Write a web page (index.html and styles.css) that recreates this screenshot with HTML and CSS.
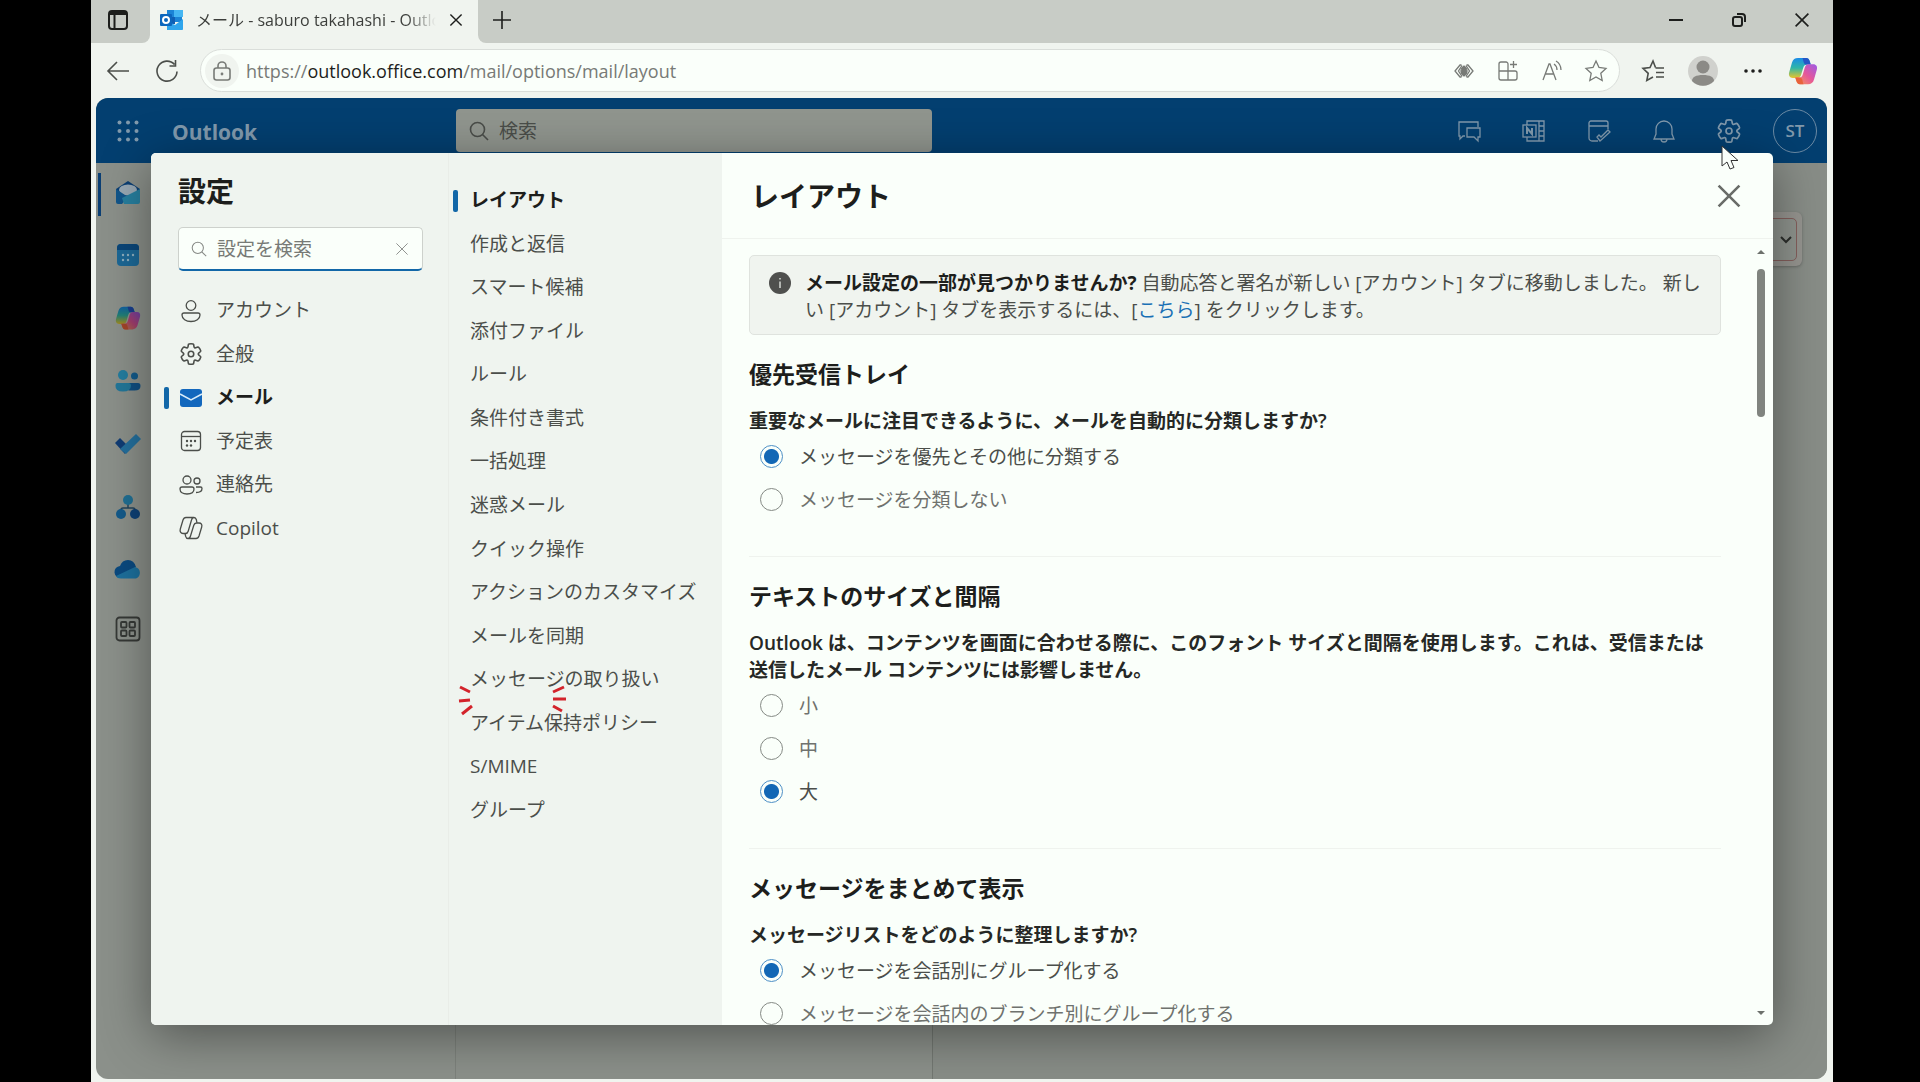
FILE: index.html
```html
<!DOCTYPE html>
<html lang="ja">
<head>
    <meta charset="UTF-8">
    <meta name="viewport" content="width=device-width, initial-scale=1.0">
    <title>メール - saburo takahashi - Outlook</title>
    <link rel="stylesheet" href="styles.css">
</head>
<body>
    <svg class="sprite" aria-hidden="true">
        <defs>
            <linearGradient id="cp-top" x1="0" y1="0" x2="0" y2="1">
                <stop offset="0" stop-color="#1a8ae8"/>
                <stop offset=".5" stop-color="#2fb6a8"/>
                <stop offset="1" stop-color="#e6c52c"/>
            </linearGradient>
            <linearGradient id="cp-bottom" x1="1" y1="0" x2="0" y2="1">
                <stop offset="0" stop-color="#9a5be8"/>
                <stop offset=".5" stop-color="#e5569b"/>
                <stop offset="1" stop-color="#f8a04c"/>
            </linearGradient>
        </defs>
        <symbol id="gear" viewBox="0 0 20 20">
            <path d="M1.91 7.38A8.5 8.5 0 0 1 3.7 4.3a.5.5 0 0 1 .54-.13l1.92.68a1 1 0 0 0 1.32-.76l.36-2a.5.5 0 0 1 .4-.4 8.53 8.53 0 0 1 3.55 0c.2.04.35.2.38.4l.37 2a1 1 0 0 0 1.32.76l1.92-.68a.5.5 0 0 1 .54.13 8.5 8.5 0 0 1 1.78 3.08c.06.2 0 .4-.15.54l-1.56 1.32a1 1 0 0 0 0 1.52l1.56 1.32a.5.5 0 0 1 .15.54 8.5 8.5 0 0 1-1.78 3.08.5.5 0 0 1-.54.13l-1.92-.68a1 1 0 0 0-1.32.76l-.37 2a.5.5 0 0 1-.38.4 8.53 8.53 0 0 1-3.56 0 .5.5 0 0 1-.39-.4l-.36-2a1 1 0 0 0-1.32-.76l-1.92.68a.5.5 0 0 1-.54-.13 8.5 8.5 0 0 1-1.78-3.08.5.5 0 0 1 .15-.54l1.56-1.32a1 1 0 0 0 0-1.52L2.06 7.92a.5.5 0 0 1-.15-.54Z"/>
            <circle cx="10" cy="10" r="2.3"/>
        </symbol>
        <symbol id="search" viewBox="0 0 20 20">
            <circle cx="8.5" cy="8.5" r="7"/>
            <path d="M13.500 13.500l5.500 5.500"/>
        </symbol>
        <symbol id="close" viewBox="0 0 20 20">
            <path d="M2 2l16 16M18 2L2 18"/>
        </symbol>
        <symbol id="copilot-color" viewBox="0 0 24 24">
            <path fill="url(#cp-top)" d="M8 1.500h6.500c1.600 0 2.300 1 2.800 2.500l.9 2.800h-2.600c-1.800 0-2.900.7-3.400 2.500l-1.700 5.700c-.5 1.700-1.600 2.500-3.200 2.500H3.800C1.400 17.500.3 15.600.9 13.200L3.200 5.200C4 2.500 5.500 1.500 8 1.500Z"/>
            <path fill="#2456c6" d="M11.500 1.500h3c1.600 0 2.300 1 2.800 2.500l.9 2.800h-3.500c-1.500 0-2-1.100-2.300-2.300C12.100 3.100 11.900 2 11.500 1.500Z"/>
            <path fill="url(#cp-bottom)" d="M16 22.500H9.500c-1.600 0-2.300-1-2.800-2.500l-.9-2.800h2.600c1.800 0 2.900-.7 3.400-2.500L13.500 9c.5-1.700 1.600-2.500 3.200-2.500h3.500c2.400 0 3.500 1.900 2.900 4.300l-2.300 8c-.8 2.700-2.300 3.700-4.800 3.700Z"/>
            <path fill="#e8623c" d="M12.500 22.500h-3c-1.600 0-2.300-1-2.800-2.500l-.9-2.800h3.500c1.500 0 2 1.100 2.300 2.300.3 1.400.5 2.500.9 3Z"/>
        </symbol>
    </svg>

    <div class="browser">
        <div class="tab-strip">
            <button class="strip-button" aria-label="タブ操作メニュー">
                <svg class="icon icon-20 bold" viewBox="0 0 20 20"><rect x="1" y="1" width="18" height="18" rx="3"/><path d="M1 4h18M1.500 2.500h17M6.500 5v14"/></svg>
            </button>
            <div class="tab">
                <svg class="favicon" viewBox="0 0 24 21">
                    <path fill="#1b84d6" d="M7 0h15v12H7z"/>
                    <path fill="#45b6f2" d="M14 0h9v7h-9z"/>
                    <path fill="#0f5fb4" d="M7 7h8v7H7z"/>
                    <path fill="#2fa5ec" d="M7 20V11l8 4 8-6v10c0 1-1 1-1 1z"/>
                    <rect fill="#0c66bd" y="4" width="12" height="12" rx="1"/>
                    <circle cx="6" cy="10" r="3" fill="none" stroke="#fff" stroke-width="2"/>
                </svg>
                <span class="tab-title">メール - saburo takahashi - Outlook</span>
                <button class="tab-close" aria-label="タブを閉じる"><svg class="icon icon-14 bold"><use href="#close"/></svg></button>
            </div>
            <button class="new-tab" aria-label="新しいタブ"><svg class="icon icon-20 medium" viewBox="0 0 20 20"><path d="M10 1v18M1 10h18"/></svg></button>
            <div class="window-controls">
                <button aria-label="最小化"><svg class="icon icon-16 bold" viewBox="0 0 16 16"><path d="M1 8h14"/></svg></button>
                <button aria-label="元に戻す"><svg class="icon icon-16 bold" viewBox="0 0 16 16"><rect x="2" y="5" width="9" height="9" rx="2"/><path d="M6 2h5a3 3 0 0 1 3 3v5"/></svg></button>
                <button aria-label="閉じる"><svg class="icon icon-16 bold"><use href="#close"/></svg></button>
            </div>
        </div>

        <div class="toolbar">
            <button aria-label="戻る"><svg class="icon icon-22 medium" viewBox="0 0 22 22"><path d="M22 11H1M10 2L1 11l9 9"/></svg></button>
            <button aria-label="更新"><svg class="icon icon-24 medium" viewBox="0 0 24 24"><path d="M22 12.500A10 10 0 1 1 19.500 5.500M20.500 1v6h-6"/></svg></button>
            <div class="address">
                <span class="site-info"><svg class="icon icon-20 gray medium" viewBox="0 0 20 20"><rect x="2" y="7" width="16" height="12" rx="2.500"/><path d="M6 7V5a4 4 0 0 1 8 0v2"/><circle cx="10" cy="13" r=".6"/></svg></span>
                <span class="url">https://<b>outlook.office.com</b>/mail/options/mail/layout</span>
                <div class="address-icons">
                    <button aria-label="パスワード"><svg class="icon icon-20 gray" viewBox="0 0 20 20"><path d="M7.500 4H6l-5 6 5 6h1.500M12.500 4H14l5 6-5 6h-1.500M8 4.500L4.500 10 8 15.500M12 4.500l3.500 5.500-3.500 5.500"/><path fill="currentColor" d="M10 5q3 2 3 5t-3 5q-3-2-3-5t3-5z"/></svg></button>
                    <button aria-label="アプリをインストール"><svg class="icon icon-20 gray" viewBox="0 0 20 20"><path d="M10 19V3a2 2 0 0 0-2-2H3a2 2 0 0 0-2 2v14a2 2 0 0 0 2 2h14a2 2 0 0 0 2-2v-5a2 2 0 0 0-2-2H1M15.500 0v7M12 3.500h7"/></svg></button>
                    <button aria-label="音声で読み上げる"><svg class="icon icon-20 gray" viewBox="0 0 20 20"><path d="M1 19L7 3h1l6 16M3 13h9M12 3q3 2 3 6M14 0q5 3 5 9"/></svg></button>
                    <button aria-label="お気に入りに追加"><svg class="icon icon-22 gray" viewBox="0 0 22 22"><path d="M11 1l3 6.500 7 .9-5.200 4.900 1.400 7.200L11 17l-6.200 3.500 1.400-7.200L1 8.400l7-.9z"/></svg></button>
                </div>
            </div>
            <div class="toolbar-icons">
                <button aria-label="お気に入り"><svg class="icon icon-22 medium" viewBox="0 0 22 22"><path d="M13.500 7.500L11 1 8 7.500l-7 .9 5.200 4.900-1.400 7.200L11 17M13.500 8H22M14 12.500h8M14 17h8"/></svg></button>
                <button aria-label="プロファイル"><svg class="profile" viewBox="0 0 30 30"><circle cx="15" cy="15" r="15" fill="#d0d1cd"/><circle cx="15" cy="11" r="6.500" fill="#8b8a86"/><path fill="#8b8a86" d="M4 25c0-4 4-6 11-6s11 2 11 6a15 15 0 0 1-22 0z"/></svg></button>
                <button aria-label="設定など"><svg class="dots" viewBox="0 0 20 20"><circle cx="3" cy="10" r="1.800"/><circle cx="10" cy="10" r="1.800"/><circle cx="17" cy="10" r="1.800"/></svg></button>
                <button aria-label="Copilot"><svg class="copilot"><use href="#copilot-color"/></svg></button>
            </div>
        </div>

        <div class="app">
            <header class="app-header">
                <button class="launcher" aria-label="アプリ起動ツール">
                    <svg viewBox="0 0 22 22" width="22" height="22"><g fill="currentColor"><circle cx="2.500" cy="2.500" r="2"/><circle cx="11" cy="2.500" r="2"/><circle cx="19.500" cy="2.500" r="2"/><circle cx="2.500" cy="11" r="2"/><circle cx="11" cy="11" r="2"/><circle cx="19.500" cy="11" r="2"/><circle cx="2.500" cy="19.500" r="2"/><circle cx="11" cy="19.500" r="2"/><circle cx="19.500" cy="19.500" r="2"/></g></svg>
                </button>
                <span class="brand">Outlook</span>
                <label class="mail-search">
                    <svg class="icon icon-20 medium"><use href="#search"/></svg>
                    <input type="text" placeholder="検索" aria-label="検索">
                </label>
                <div class="header-icons">
                    <button aria-label="Teams チャット"><svg class="icon icon-24" viewBox="0 0 24 24"><path d="M8 17H6l-3 3v-3H2V3h19v5"/><path d="M10 9h13v9h-2v4l-4-4h-7z"/></svg></button>
                    <button aria-label="OneNote フィード"><svg class="icon icon-24" viewBox="0 0 24 24"><path d="M5 6V2h17v20H5v-4M17 2v20M17 7h5M17 12h5M17 17h5"/><rect x="1" y="6" width="13" height="12"/><path stroke-width="2" d="M5 15V9l5 6V9"/></svg></button>
                    <button aria-label="予定一覧"><svg class="icon icon-24" viewBox="0 0 24 24"><path d="M11 22H5a3 3 0 0 1-3-3V4a2 2 0 0 1 2-2h15a2 2 0 0 1 2 2v6M2 7h19M10 18l3 4 10-9-2-2-7 7-2-2z"/></svg></button>
                    <button aria-label="通知"><svg class="icon icon-24" viewBox="0 0 24 24"><path d="M12 2a8 8 0 0 0-8 8v5l-2 5h20l-2-5v-5a8 8 0 0 0-8-8zM9 20q0 3 3 3t3-3"/></svg></button>
                    <button aria-label="設定"><svg class="icon icon-26"><use href="#gear"/></svg></button>
                    <button class="avatar">ST</button>
                </div>
            </header>

            <div class="app-body">
                <nav class="rail">
                    <a href="#" class="active" aria-label="メール"><svg viewBox="0 0 26 26"><path fill="#0b3f74" d="M1 10L13 2l12 8v8H1z"/><ellipse cx="13" cy="11" rx="9" ry="5.500" fill="#9aa9b4"/><path fill="#12568a" d="M1 10l12 8-6 7H3a2 2 0 0 1-2-2z"/><path fill="#277f9f" d="M25 10l-18 9 2 6h14a2 2 0 0 0 2-2z"/></svg></a>
                    <a href="#" aria-label="予定表"><svg viewBox="0 0 26 26"><rect x="2" y="2" width="22" height="22" rx="4" fill="#1c6896"/><path fill="#0b4679" d="M2 8V6a4 4 0 0 1 4-4h14a4 4 0 0 1 4 4v2z"/><g fill="#8fb0bf"><circle cx="8" cy="13" r="1.200"/><circle cx="13" cy="13" r="1.200"/><circle cx="18" cy="13" r="1.200"/><circle cx="8" cy="18" r="1.200"/><circle cx="13" cy="18" r="1.200"/></g></svg></a>
                    <a href="#" aria-label="Copilot"><svg class="dim" viewBox="0 0 24 24"><use href="#copilot-color"/></svg></a>
                    <a href="#" aria-label="連絡先"><svg viewBox="0 0 26 26"><circle cx="8" cy="7" r="5" fill="#237d9f"/><circle cx="19.500" cy="8" r="3.500" fill="#135a8a"/><path fill="#104f82" d="M14 15h9q2.500 0 2.500 3 0 4.500-6 4.500h-6z"/><path fill="#237799" d="M2 15h12q2 0 2 2.500 0 6-8 6T.500 17.500Q.500 15 2 15z"/></svg></a>
                    <a href="#" aria-label="To Do"><svg viewBox="0 0 26 26"><path fill="#103c74" d="M0 12l5-5 9 9-4 7z"/><path fill="#246f9c" d="M5 18L21 3l5 5-15 15z"/></svg></a>
                    <a href="#" aria-label="組織エクスプローラー"><svg viewBox="0 0 26 26"><path fill="none" stroke="#23445c" stroke-width="1.500" d="M13 10v4M6 20v-4q0-2 2-2h10q2 0 2 2v4"/><circle cx="13" cy="6" r="5" fill="#206f93"/><circle cx="6" cy="20" r="5" fill="#135a8a"/><circle cx="20" cy="20" r="5" fill="#0e4176"/></svg></a>
                    <a href="#" aria-label="OneDrive"><svg class="cloud" viewBox="0 0 28 28"><path fill="#0b4a80" d="M7 22a6 6 0 0 1-1-12q2-6 8-6t8 7z"/><path fill="#1d709d" d="M2 20l19-9a6 6 0 0 1 1 11.500H7q-4 0-5-2.500z"/></svg></a>
                    <a href="#" aria-label="その他のアプリ"><svg class="outline" viewBox="0 0 26 26"><rect x="1.500" y="1.500" width="23" height="23" rx="3"/><rect x="6" y="6" width="5.500" height="5.500" rx="1"/><rect x="14.500" y="6" width="5.500" height="5.500" rx="1"/><rect x="6" y="14.500" width="5.500" height="5.500" rx="1"/><rect x="14.500" y="14.500" width="5.500" height="5.500" rx="1"/></svg></a>
                </nav>
                <div class="folder-pane"></div>
                <div class="message-pane"></div>
                <div class="reading-pane">
                    <div class="ribbon">
                        <button class="ribbon-more" aria-label="その他"><svg class="icon icon-12 bold" viewBox="0 0 12 12"><path d="M1 3l5 5 5-5"/></svg></button>
                    </div>
                </div>
            </div>

            <div class="backdrop">
                <div class="dialog" role="dialog" aria-label="設定">
                    <div class="categories">
                        <h1>設定</h1>
                        <label class="settings-search">
                            <svg class="icon icon-16 light"><use href="#search"/></svg>
                            <input type="text" placeholder="設定を検索" aria-label="設定を検索">
                            <button aria-label="クリア"><svg class="icon icon-14 light"><use href="#close"/></svg></button>
                        </label>
                        <ul class="category-list">
                            <li><a href="#"><svg class="icon icon-24" viewBox="0 0 24 24"><circle cx="12" cy="6.500" r="4.800"/><path d="M5 14h14a2 2 0 0 1 2 2c0 4-4 6.500-9 6.500S3 20 3 16a2 2 0 0 1 2-2z"/></svg>アカウント</a></li>
                            <li><a href="#"><svg class="icon icon-24"><use href="#gear"/></svg>全般</a></li>
                            <li><a href="#" class="active"><svg class="icon icon-24" viewBox="0 0 24 24"><rect x="1" y="3" width="22" height="18" rx="3" fill="#1267bd" stroke="none"/><path stroke="#d9ecfa" stroke-width="1.500" d="M1 8l11 6 11-6"/></svg>メール</a></li>
                            <li><a href="#"><svg class="icon icon-24" viewBox="0 0 24 24"><rect x="2.500" y="2.500" width="19" height="19" rx="3"/><path d="M2.500 7.500h19"/><g fill="currentColor" stroke="none"><circle cx="8" cy="12" r="1.200"/><circle cx="12" cy="12" r="1.200"/><circle cx="16" cy="12" r="1.200"/><circle cx="8" cy="16.500" r="1.200"/><circle cx="12" cy="16.500" r="1.200"/></g></svg>予定表</a></li>
                            <li><a href="#"><svg class="icon icon-24" viewBox="0 0 24 24"><circle cx="8" cy="7" r="4"/><circle cx="18" cy="8" r="3"/><path d="M3 14h10a2 2 0 0 1 2 2c0 3.500-3 5-7 5s-7-1.500-7-5a2 2 0 0 1 2-2zM17 14h4.500a1.500 1.500 0 0 1 1.500 1.500c0 3-2.500 4-6 4"/></svg>連絡先</a></li>
                            <li><a href="#"><svg class="icon icon-24" viewBox="0 0 24 24"><path d="M7 1.500h8c1.500 0 2 1 2.400 2.300L18 7M7 1.500C5.500 1.500 4.500 2.500 4 4L1.300 13c-.7 2.500.5 4.500 2.700 4.500h2.500c1.500 0 2.300-.8 2.700-2.200L12.500 4c.4-1.500 1-2.500 2.500-2.500M17 22.500H9c-1.500 0-2-1-2.400-2.300L6 17.500M17 22.500c1.500 0 2.500-1 3-2.500l2.700-9c.7-2.500-.5-4-2.700-4h-2.500c-1.500 0-2.300.8-2.700 2.200L11.500 20c-.4 1.500-1 2.500-2.500 2.500"/></svg>Copilot</a></li>
                        </ul>
                    </div>

                    <div class="subpages">
                        <ul class="subpage-list">
                            <li><a href="#" class="active">レイアウト</a></li>
                            <li><a href="#">作成と返信</a></li>
                            <li><a href="#">スマート候補</a></li>
                            <li><a href="#">添付ファイル</a></li>
                            <li><a href="#">ルール</a></li>
                            <li><a href="#">条件付き書式</a></li>
                            <li><a href="#">一括処理</a></li>
                            <li><a href="#">迷惑メール</a></li>
                            <li><a href="#">クイック操作</a></li>
                            <li><a href="#">アクションのカスタマイズ</a></li>
                            <li><a href="#">メールを同期</a></li>
                            <li><a href="#">メッセージの取り扱い</a></li>
                            <li><a href="#">アイテム保持ポリシー</a></li>
                            <li><a href="#">S/MIME</a></li>
                            <li><a href="#">グループ</a></li>
                        </ul>
                        <svg class="click-marks" viewBox="0 0 108 32"><path d="M2 3l10 5M1 17l11-1M4 30l10-8M95 8l11-5M95 15h13M95 22l9 5"/></svg>
                    </div>

                    <div class="page">
                        <div class="page-header">
                            <h2>レイアウト</h2>
                            <button aria-label="閉じる"><svg class="icon icon-26 thick"><use href="#close"/></svg></button>
                        </div>
                        <div class="page-body">
                            <div class="page-content">
                                <div class="notice">
                                    <svg class="info" viewBox="0 0 22 22"><circle cx="11" cy="11" r="11" fill="#4f504e"/><path stroke="#d5d8d4" stroke-width="1.500" d="M11 9.500V16M11 6v1.500"/></svg>
                                    <p><b>メール設定の一部が見つかりませんか?</b> 自動応答と署名が新しい [アカウント] タブに移動しました。 新しい [アカウント] タブを表示するには、[<a href="#">こちら</a>] をクリックします。</p>
                                </div>

                                <section>
                                    <h3>優先受信トレイ</h3>
                                    <fieldset>
                                        <legend>重要なメールに注目できるように、メールを自動的に分類しますか?</legend>
                                        <label><input type="radio" name="focused" checked><span>メッセージを優先とその他に分類する</span></label>
                                        <label><input type="radio" name="focused"><span>メッセージを分類しない</span></label>
                                    </fieldset>
                                </section>

                                <section>
                                    <h3>テキストのサイズと間隔</h3>
                                    <fieldset>
                                        <legend>Outlook は、コンテンツを画面に合わせる際に、このフォント サイズと間隔を使用します。これは、受信または送信したメール コンテンツには影響しません。</legend>
                                        <label><input type="radio" name="size"><span>小</span></label>
                                        <label><input type="radio" name="size"><span>中</span></label>
                                        <label><input type="radio" name="size" checked><span>大</span></label>
                                    </fieldset>
                                </section>

                                <section>
                                    <h3>メッセージをまとめて表示</h3>
                                    <fieldset>
                                        <legend>メッセージリストをどのように整理しますか?</legend>
                                        <label><input type="radio" name="thread" checked><span>メッセージを会話別にグループ化する</span></label>
                                        <label><input type="radio" name="thread"><span>メッセージを会話内のブランチ別にグループ化する</span></label>
                                    </fieldset>
                                </section>
                            </div>
                            <div class="scrollbar">
                                <span class="arrow-up"></span>
                                <span class="thumb"></span>
                                <span class="arrow-down"></span>
                            </div>
                        </div>
                    </div>
                </div>
            </div>

            <svg class="pointer" viewBox="0 0 18 26"><path fill="#fafffa" stroke="#333" d="M1 1v20l5-4 3 7 4-1.500-3-7h7z"/></svg>
        </div>
    </div>
</body>
</html>
```
FILE: styles.css
```css
* {
    margin: 0;
    padding: 0;
    box-sizing: border-box;
}

body {
    height: 100vh;
    padding: 0 87px 0 91px;
    background: #000;
    color: #4b4e4a;
    font-family: "Open Sans", "Noto Sans CJK JP", sans-serif;
    font-size: 19px;
    line-height: 27px;
    overflow: hidden;
}

button {
    display: flex;
    align-items: center;
    justify-content: center;
    border: none;
    background: none;
    color: inherit;
    font: inherit;
    cursor: pointer;
}

input {
    border: none;
    outline: none;
    background: none;
    color: inherit;
    font: inherit;
    min-width: 0;
}

a {
    color: inherit;
    text-decoration: none;
}

ul {
    list-style: none;
}

/* Icons */
.sprite {
    position: absolute;
    width: 0;
    height: 0;
}

.icon {
    flex: none;
    fill: none;
    stroke: currentColor;
    stroke-width: 1.3;
    overflow: visible;
}

.icon.medium { stroke-width: 1.6; }
.icon.bold { stroke-width: 2; }
.icon.thick { stroke-width: 2; color: #6a6d69; }
.icon.gray { color: #777a76; }
.icon.light { color: #858884; }
.icon-12 { width: 12px; height: 12px; }
.icon-14 { width: 14px; height: 14px; }
.icon-16 { width: 16px; height: 16px; }
.icon-20 { width: 20px; height: 20px; }
.icon-22 { width: 22px; height: 22px; }
.icon-24 { width: 24px; height: 24px; }
.icon-26 { width: 26px; height: 26px; }

/* Browser window */
.browser {
    height: 100%;
    display: flex;
    flex-direction: column;
    background: #f0f4ef;
}

.tab-strip {
    display: flex;
    height: 43px;
    background: #f0f4ef;
    color: #1d1e1c;
}

.strip-button {
    width: 59px;
    padding-right: 5px;
    padding-bottom: 3px;
    background: #c8ccc6;
    border-bottom-right-radius: 8px;
}

.tab {
    display: flex;
    align-items: center;
    width: 328px;
    padding: 0 14px 3px 10px;
}

.favicon {
    flex: none;
    width: 24px;
    height: 21px;
    margin-right: 12px;
}

.tab-title {
    flex: 1;
    font-size: 16px;
    color: #3c3e3b;
    white-space: nowrap;
    overflow: hidden;
    -webkit-mask-image: linear-gradient(to right, #000 88%, transparent 100%);
    mask-image: linear-gradient(to right, #000 88%, transparent 100%);
}

.tab-close {
    width: 16px;
    margin-left: 12px;
}

.new-tab {
    width: 47px;
    padding-bottom: 4px;
    background: #c8ccc6;
    border-bottom-left-radius: 8px;
}

.window-controls {
    flex: 1;
    display: flex;
    justify-content: flex-end;
    padding-bottom: 3px;
    background: #c8ccc6;
}

.window-controls button {
    width: 63px;
}

.toolbar {
    display: flex;
    align-items: center;
    height: 55px;
    padding: 0 15px;
}

.toolbar > button {
    width: 24px;
    margin-right: 25px;
}

.toolbar > button + button {
    margin-right: 21px;
}

.address {
    flex: 1;
    display: flex;
    align-items: center;
    height: 43px;
    padding: 0 13px 0 4px;
    border: 1px solid #dadeda;
    border-radius: 22px;
    background: #fafffa;
}

.site-info {
    display: flex;
    align-items: center;
    justify-content: center;
    width: 34px;
    height: 34px;
    margin-right: 7px;
    border-radius: 50%;
    background: #f0f4ef;
}

.url {
    flex: 1;
    padding-top: 2px;
    font-size: 18px;
    color: #777a76;
}

.url b {
    font-weight: 400;
    color: #1d1e1c;
}

.address-icons,
.toolbar-icons {
    display: flex;
    align-items: center;
}

.address-icons {
    gap: 24px;
}

.address-icons button {
    width: 20px;
}

.toolbar-icons {
    gap: 20px;
    margin-left: 18px;
}

.toolbar-icons button {
    width: 30px;
}

.profile {
    width: 30px;
    height: 30px;
}

.dots {
    width: 20px;
    height: 20px;
    fill: #1d1e1c;
}

.copilot {
    width: 32px;
    height: 30px;
}

/* Outlook behind the dialog */
.app {
    position: relative;
    flex: 1;
    display: flex;
    flex-direction: column;
    margin: 0 6px 3px 5px;
    border-radius: 12px;
    background: #8b908a;
    overflow: hidden;
}

.app-header {
    display: flex;
    align-items: flex-start;
    height: 65px;
    background: #033f70;
    color: #8199ac;
}

.launcher {
    width: 64px;
    height: 65px;
}

.brand {
    width: 296px;
    padding-left: 12px;
    font-size: 21px;
    font-weight: 700;
    line-height: 68px;
}

.mail-search {
    display: flex;
    align-items: center;
    gap: 10px;
    width: 476px;
    height: 43px;
    margin-top: 11px;
    padding: 0 13px;
    border-radius: 4px;
    background: #90958e;
    color: #4a4d49;
}

.mail-search input {
    flex: 1;
    padding-top: 2px;
}

input::placeholder {
    color: inherit;
    opacity: 1;
}

.header-icons {
    display: flex;
    flex: 1;
    justify-content: flex-end;
    align-items: center;
    height: 65px;
    padding-right: 10px;
}

.header-icons button {
    width: 65px;
    height: 44px;
}

.header-icons .avatar {
    width: 44px;
    margin-left: 12px;
    border: 1px solid #6b8aa4;
    border-radius: 50%;
    font-size: 17px;
    font-weight: 600;
}

.app-body {
    flex: 1;
    display: flex;
}

.rail {
    width: 64px;
    padding-top: 10px;
}

.rail a {
    display: flex;
    align-items: center;
    justify-content: center;
    height: 43px;
    margin: 0 0 20px 2px;
    padding: 0 5px 5px 0;
    border-left: 3px solid transparent;
}

.rail a.active {
    border-color: #0b3f74;
}

.rail a:last-child {
    margin-top: -4px;
}

.rail svg {
    width: 26px;
    height: 26px;
}

.rail .cloud {
    width: 30px;
    height: 28px;
}

.rail .dim {
    filter: brightness(.7);
}

.rail .outline {
    fill: none;
    stroke: #363936;
    stroke-width: 1.8;
}

.folder-pane {
    width: 296px;
    border-right: 1px solid #7d827c;
}

.message-pane {
    width: 477px;
    border-right: 1px solid #737872;
    background: #8b908a;
}

.reading-pane {
    flex: 1;
    padding: 49px 25px 0 8px;
    background: #888d87;
}

.ribbon {
    height: 54px;
    padding: 6px 5px 5px;
    border-radius: 6px;
    background: #969590;
    box-shadow: 0 1px 3px rgba(0, 0, 0, 0.25);
}

.ribbon-more {
    width: 100%;
    height: 43px;
    padding-right: 4px;
    justify-content: flex-end;
    border: 1px solid #845f5c;
    border-radius: 5px;
    background: #8f948e;
    color: #2c2f2c;
}

/* Settings dialog */
.backdrop {
    position: absolute;
    inset: 0;
    display: flex;
    padding: 55px 54px 54px 55px;
}

.dialog {
    flex: 1;
    display: flex;
    border-radius: 5px;
    background: #fafffa;
    box-shadow: 0 10px 50px rgba(0, 0, 0, 0.42);
    overflow: hidden;
}

.categories {
    width: 298px;
    padding: 20px 25px 0 27px;
    border-right: 1px solid #e9ede8;
    background: #eff4ef;
}

.categories h1 {
    font-size: 28px;
    line-height: 36px;
    font-weight: 700;
    color: #1d1e1c;
}

.settings-search {
    display: flex;
    align-items: center;
    gap: 10px;
    height: 44px;
    margin-top: 18px;
    padding: 0 10px 0 12px;
    border: 1px solid #cdd1cc;
    border-bottom: 2px solid #1267a8;
    border-radius: 5px;
    background: #fafffa;
    color: #777a76;
}

.settings-search input {
    flex: 1;
    padding-top: 2px;
}

.settings-search button {
    width: 20px;
}

.category-list {
    display: grid;
    grid-auto-rows: 1fr;
    height: 261px;
    margin: 18px 0 0 -14px;
}

.category-list a,
.subpage-list a {
    display: flex;
    align-items: center;
    height: 100%;
}

.category-list a::before,
.subpage-list a::before {
    content: "";
    width: 5px;
    height: 22px;
    border-radius: 2px;
}

.category-list .active,
.subpage-list .active {
    font-weight: 700;
    color: #1d1e1c;
}

.category-list .active::before,
.subpage-list .active::before {
    background: #1267a8;
}

.category-list svg {
    margin: 0 13px 0 10px;
}

.subpages {
    position: relative;
    width: 273px;
    padding: 26px 0 0 4px;
    background: #eff4ef;
}

.subpage-list {
    display: grid;
    grid-auto-rows: 1fr;
    height: 653px;
}

.subpage-list a::before {
    margin-right: 12px;
}

/* Click effect drawn over the list */
.click-marks {
    position: absolute;
    top: 531px;
    left: 9px;
    width: 108px;
    height: 32px;
    fill: none;
    stroke: #d3232b;
    stroke-width: 3;
    overflow: visible;
}

.page {
    flex: 1;
    display: flex;
    flex-direction: column;
    min-width: 0;
}

.page-header {
    display: flex;
    align-items: center;
    justify-content: space-between;
    height: 86px;
    padding: 0 31px 0 29px;
    border-bottom: 1px solid #eff3ee;
}

.page-header h2 {
    font-size: 28px;
    line-height: 36px;
    color: #1d1e1c;
}

.page-body {
    flex: 1;
    display: flex;
    min-height: 0;
    overflow: hidden;
}

.page-content {
    flex: 1;
    padding: 16px 28px 0 27px;
}

.notice {
    display: flex;
    gap: 14px;
    padding: 14px 12px 10px 19px;
    border: 1px solid #dfe3de;
    border-radius: 5px;
    background: #f0f4ef;
}

.notice .info {
    flex: none;
    width: 22px;
    height: 22px;
    margin-top: 2px;
}

.notice b {
    color: #1d1e1c;
}

.notice a {
    color: #1a70b5;
}

section {
    padding: 23px 0 35px;
    border-bottom: 1px solid #eff3ee;
}

section h3 {
    margin-bottom: 18px;
    font-size: 23px;
    line-height: 32px;
    color: #1d1e1c;
}

fieldset {
    border: none;
}

legend {
    font-weight: 600;
    color: #262825;
}

fieldset label {
    display: flex;
    align-items: center;
    gap: 16px;
    height: 43px;
    padding-left: 11px;
}

fieldset span {
    padding-top: 2px;
}

input[type="radio"] {
    appearance: none;
    width: 23px;
    height: 23px;
    border: 1px solid #858a85;
    border-radius: 50%;
}

input[type="radio"]:checked {
    border-color: #4d8fc6;
    background: radial-gradient(circle, #1267b5 7px, transparent 8px);
}

fieldset input:not(:checked) + span {
    color: #6f726e;
}

.scrollbar {
    display: flex;
    flex-direction: column;
    align-items: center;
    width: 24px;
    padding: 11px 0 10px;
}

.arrow-up {
    border: 4px solid transparent;
    border-top: none;
    border-bottom: 4px solid #6d716c;
}

.arrow-down {
    margin-top: auto;
    border: 4px solid transparent;
    border-bottom: none;
    border-top: 4px solid #6d716c;
}

.thumb {
    width: 8px;
    height: 148px;
    margin-top: 15px;
    border-radius: 4px;
    background: #80847f;
}

.pointer {
    position: absolute;
    top: 47px;
    right: 88px;
    width: 18px;
    height: 26px;
}
```
